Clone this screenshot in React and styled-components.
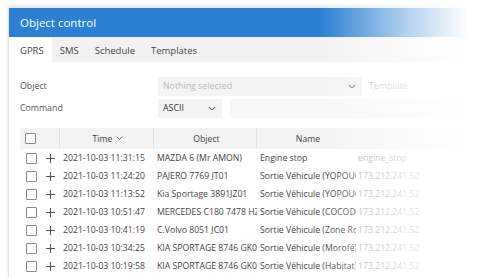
import React from 'react';
import styled, { createGlobalStyle } from 'styled-components';

const GlobalStyle = createGlobalStyle`
  body {
    margin: 0;
    background: #fff;
    font-family: "Open Sans", "Liberation Sans", sans-serif;
  }
`;

const Page = styled.div`
  position: relative;
  width: 500px;
  height: 277px;
  overflow: hidden;
  padding: 8px 0 0 8px;
  box-sizing: border-box;
`;

const Panel = styled.div`
  border-left: 1px solid #e4e4e4;
  box-shadow: 0 -2px 4px rgba(0, 0, 0, 0.12);
  height: 100%;
`;

const Header = styled.div`
  height: 29px;
  background: #2b80d3;
  color: #fff;
  font-size: 11.5px;
  display: flex;
  align-items: center;
  padding-left: 11px;
`;

const TabBar = styled.div`
  height: 25px;
  background: #f2f2f2;
  display: flex;
  align-items: stretch;
`;

const Tab = styled.div`
  display: flex;
  align-items: center;
  padding: 2px 8px 0;
  font-size: 9.5px;
  color: #444;
  background: ${(p) => (p.$active ? '#fff' : 'transparent')};
  &:first-child {
    padding-left: 11px;
  }
`;

const Form = styled.div`
  padding: 14px 0 0 11px;
  display: flex;
  flex-direction: column;
  gap: 2px;
`;

const FormRow = styled.div`
  display: flex;
  align-items: center;
  height: 20px;
`;

const Label = styled.div`
  width: 138px;
  font-size: 8.8px;
  color: #555;
`;

const Select = styled.div`
  width: ${(p) => p.$width}px;
  height: 19px;
  background: #f4f4f4;
  display: flex;
  align-items: center;
  justify-content: space-between;
  padding: 0 6px 0 5px;
  box-sizing: border-box;
  font-size: 8.8px;
  color: ${(p) => (p.$placeholder ? '#bbb' : '#333')};
`;

const Hint = styled.div`
  margin-left: 7px;
  font-size: 8.8px;
  color: #bbb;
`;

const TextInput = styled.div`
  margin-left: 8px;
  flex: 1;
  height: 19px;
  background: #f7f7f7;
`;

const Table = styled.div`
  margin: 10px 0 0 11px;
  font-size: 8.7px;
  color: #444;
`;

const HeadRow = styled.div`
  display: flex;
  height: 21px;
  background: #f3f3f3;
`;

const Row = styled.div`
  display: flex;
  height: 18px;
`;

const Cell = styled.div`
  width: ${(p) => p.$w}px;
  flex: ${(p) => (p.$w ? 'none' : 1)};
  display: flex;
  align-items: center;
  justify-content: ${(p) => (p.$center ? 'center' : 'flex-start')};
  padding-left: ${(p) => p.$pl ?? 3}px;
  box-sizing: border-box;
  white-space: nowrap;
  overflow: hidden;
  color: ${(p) => p.$color || 'inherit'};
  border-right: ${(p) => (p.$sep ? '1px solid #e2e2e2' : 'none')};
`;

const HeadText = styled.span`
  display: flex;
  align-items: center;
  gap: 4px;
`;

const Box = styled.span`
  width: 9px;
  height: 9px;
  border: 1px solid #8a8a8a;
  border-radius: 1px;
  background: #fff;
  flex: none;
`;

const PlusIcon = styled.svg`
  margin-left: 9px;
  flex: none;
`;

const Fade = styled.div`
  position: absolute;
  top: 0;
  right: 0;
  bottom: 0;
  width: 180px;
  background: linear-gradient(to right, rgba(255, 255, 255, 0) 0%, rgba(255, 255, 255, 0.6) 45%, #fff 82%);
  pointer-events: none;
`;

const Chevron = ({ size = 8 }) => (
  <svg width={size} height={size * 0.6} viewBox="0 0 10 6" fill="none">
    <path d="M1 1l4 4 4-4" stroke="#666" strokeWidth="1.3" />
  </svg>
);

const Plus = () => (
  <PlusIcon width="9" height="9" viewBox="0 0 9 9">
    <path d="M4.5 0v9M0 4.5h9" stroke="#555" strokeWidth="1.1" />
  </PlusIcon>
);

const COLS = [40, 94, 103, 99];

const rows = [
  ['2021-10-03 11:31:15', 'MAZDA 6 (Mr AMON)', 'Engine stop', 'engine_stop'],
  ['2021-10-03 11:24:20', 'PAJERO 7769 JT01', 'Sortie Véhicule (YOPOUGON)', '173.212.241.52'],
  ['2021-10-03 11:13:52', 'Kia Sportage 3891JZ01', 'Sortie Véhicule (YOPOUGON)', '173.212.241.52'],
  ['2021-10-03 10:51:47', 'MERCEDES C180 7478 HZ01', 'Sortie Véhicule (COCODY)', '173.212.241.52'],
  ['2021-10-03 10:41:19', 'C.Volvo 8051 JC01', 'Sortie Véhicule (Zone Rouge)', '173.212.241.52'],
  ['2021-10-03 10:34:25', 'KIA SPORTAGE 8746 GK01', 'Sortie Véhicule (Morofé)', '173.212.241.52'],
  ['2021-10-03 10:19:58', 'KIA SPORTAGE 8746 GK01', 'Sortie Véhicule (Habitat)', '173.212.241.52'],
];

const App = () => (
  <Page>
    <GlobalStyle />
    <Panel>
      <Header>Object control</Header>
      <TabBar>
        <Tab $active>GPRS</Tab>
        <Tab>SMS</Tab>
        <Tab>Schedule</Tab>
        <Tab>Templates</Tab>
      </TabBar>
      <Form>
        <FormRow>
          <Label>Object</Label>
          <Select $width={204} $placeholder>
            Nothing selected
            <Chevron />
          </Select>
          <Hint>Template</Hint>
        </FormRow>
        <FormRow>
          <Label>Command</Label>
          <Select $width={64}>
            ASCII
            <Chevron />
          </Select>
          <TextInput />
        </FormRow>
      </Form>
      <Table>
        <HeadRow>
          <Cell $w={COLS[0]} $pl={5} $sep><Box /></Cell>
          <Cell $w={COLS[1]} $center $sep>
            <HeadText>Time <Chevron size={7} /></HeadText>
          </Cell>
          <Cell $w={COLS[2]} $center $sep>Object</Cell>
          <Cell $w={COLS[3]} $center>Name</Cell>
          <Cell />
        </HeadRow>
        {rows.map(([time, obj, name, ip]) => (
          <Row key={time}>
            <Cell $w={COLS[0]} $pl={6}><Box /><Plus /></Cell>
            <Cell $w={COLS[1]}>{time}</Cell>
            <Cell $w={COLS[2]}>{obj}</Cell>
            <Cell $w={COLS[3]}>{name}</Cell>
            <Cell $color="#aaa" $pl={2}>{ip}</Cell>
          </Row>
        ))}
      </Table>
    </Panel>
    <Fade />
  </Page>
);

export default App;
